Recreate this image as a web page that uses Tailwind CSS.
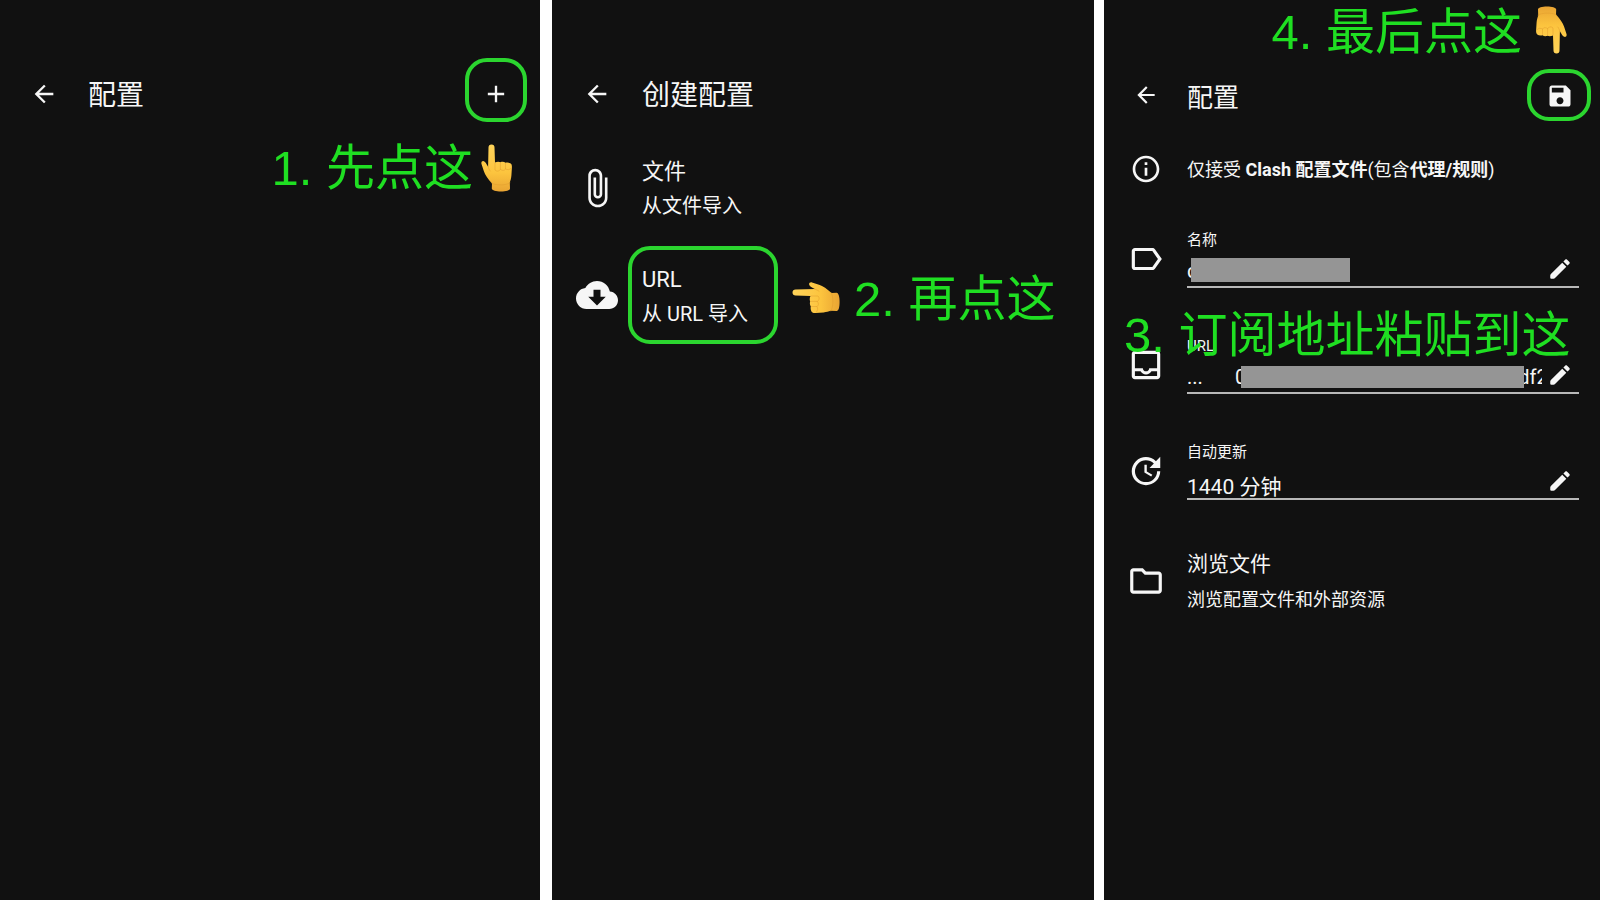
<!DOCTYPE html>
<html lang="zh-CN" class="h-full">
  <head>
    <meta charset="UTF-8" />
    <meta name="viewport" content="width=device-width, initial-scale=1.0" />
    <title>Clash 配置教程</title>
    <script src="https://cdn.jsdelivr.net/npm/@tailwindcss/browser@4"></script>
  </head>
  <body class="grid min-h-screen grid-cols-[552fr_552fr_496fr] bg-[#111111] font-[Roboto,'Noto_Sans_CJK_SC',sans-serif] text-[#f6f6f6]">
    <!-- shared icons -->
    <svg class="absolute size-0" aria-hidden="true">
      <defs>
        <linearGradient id="skin" x1="0" y1="0" x2="0" y2="1">
          <stop offset="0" stop-color="#ffd45a" />
          <stop offset="0.6" stop-color="#fcc43e" />
          <stop offset="1" stop-color="#e9a433" />
        </linearGradient>
        <g id="hand">
          <path fill="url(#skin)" d="M10.5.5c2 0 3 1.300 3 3L14 18.500c2-1 4-1 5.500-.3 1.800-.6 3.800-.4 5 .6 2-.4 4-.2 5.200.8 1 .8 1.300 2 1.200 4l-.5 8c-.2 3-1 5-1.600 7l.2 6c0 2-4 3-9 3s-9-1-9.200-3l.2-5C7 35 4 31 2.800 27L.5 20c-.6-2 .8-3.200 2.200-2.800 1.400.4 2.400 2 4.400 5.600L7.500 3.500c0-1.800 1-3 3-3z" />
          <path fill="none" stroke="#e0992c" stroke-opacity="0.6" stroke-width="0.8" stroke-linecap="round" d="M14 19v7c2 2 4 1 5.400-.5V19M19.500 25.500c2 1.500 4 1 5-.5v-5.500M24.500 25c2 1.200 4 .8 5.500-.6M11 39.500c5 2 13 2 18-.5M7.200 22.500c.5 2 .8 3 2 4.500" />
        </g>
      </defs>
      <symbol id="back" viewBox="0 0 24 24"><path d="M20 11H7.830l5.590-5.590L12 4l-8 8 8 8 1.410-1.410L7.830 13H20v-2z" /></symbol>
      <symbol id="edit" viewBox="0 0 24 24"><path d="M3 18q0-.8.600-1.400L14.060 6.190l3.750 3.750L7.400 20.400Q6.800 21 6 21H4q-1 0-1-1zM20.710 7.040c.39-.39.39-1.020 0-1.410l-2.340-2.340c-.39-.39-1.020-.39-1.410 0l-1.830 1.830 3.750 3.750 1.830-1.830z" /></symbol>
      <symbol id="point-up" viewBox="0 0 31 48"><use href="#hand" /></symbol>
      <symbol id="point-left" viewBox="0 0 48 31"><use href="#hand" transform="matrix(0 1 1 0 0 0)" /></symbol>
      <symbol id="point-down" viewBox="0 0 31 48"><use href="#hand" transform="rotate(180 15.5 24)" /></symbol>
    </svg>

    <!-- step 1 -->
    <section class="border-r-12 border-white pt-[58px]">
      <header class="grid h-[72px] grid-cols-[88px_1fr_auto] items-center pr-[13px]">
        <button type="button" aria-label="返回" class="justify-self-center"><svg class="size-7 fill-current"><use href="#back" /></svg></button>
        <h1 class="pt-1 text-[28px] leading-8">配置</h1>
        <button type="button" aria-label="新建" class="flex h-16 w-[62px] items-center justify-center self-start rounded-[22px] border-4 border-[#2bd52f] pt-2">
          <svg viewBox="0 0 24 24" class="size-7 fill-current"><path d="M19 13h-6v6h-2v-6H5v-2h6V5h2v6h6v2z" /></svg>
        </button>
      </header>
      <p class="mt-[14px] flex items-center justify-end gap-2 pr-[28px] font-['Liberation_Sans','Noto_Sans_CJK_SC',sans-serif] text-[49px] leading-[48px] whitespace-nowrap text-[#1fdf22]">
        1. 先点这
        <svg class="h-12 w-[31px]"><use href="#point-up" /></svg>
      </p>
    </section>

    <!-- step 2 -->
    <section class="border-r-10 border-white pt-[58px]">
      <header class="grid h-[72px] grid-cols-[90px_1fr] items-center">
        <button type="button" aria-label="返回" class="justify-self-center"><svg class="size-7 fill-current"><use href="#back" /></svg></button>
        <h1 class="pt-1 text-[28px] leading-8">创建配置</h1>
      </header>
      <ul class="mt-[22px] space-y-[22px]">
        <li class="grid grid-cols-[90px_1fr] items-center">
          <svg viewBox="0 0 24 24" class="size-[42px] justify-self-center fill-current"><path d="M16.500 6v11.500c0 2.210-1.790 4-4 4s-4-1.790-4-4V5c0-1.380 1.120-2.500 2.500-2.500s2.500 1.120 2.500 2.500v10.500c0 .55-.45 1-1 1s-1-.45-1-1V6H10v9.500c0 1.380 1.120 2.500 2.500 2.500s2.500-1.120 2.500-2.500V5c0-2.210-1.790-4-4-4S7 2.790 7 5v12.500c0 3.040 2.460 5.500 5.500 5.500s5.500-2.460 5.500-5.500V6h-1.500z" /></svg>
          <button type="button" class="pt-0.5 text-left text-xl leading-[35px]">
            <span class="block text-[22px] leading-[35px]">文件</span>
            从文件导入
          </button>
        </li>
        <li class="grid grid-cols-[90px_1fr] items-center">
          <svg viewBox="0 0 24 24" class="size-[42px] justify-self-center fill-current"><path d="M19.350 10.040C18.670 6.590 15.640 4 12 4 9.110 4 6.600 5.640 5.350 8.040 2.340 8.360 0 10.910 0 14c0 3.310 2.690 6 6 6h13c2.760 0 5-2.240 5-5 0-2.640-2.050-4.780-4.650-4.960zM17 13l-5 5-5-5h3V9h4v4h3z" /></svg>
          <div class="-ml-[14px] flex items-center">
            <button type="button" class="h-[98px] w-[150px] shrink-0 rounded-[22px] border-4 border-[#2bd52f] pt-1 pl-[10px] text-left text-xl leading-[35px] whitespace-nowrap">
              <span class="block text-[22px] leading-[35px]">URL</span>
              从 URL 导入
            </button>
            <p class="ml-[14px] flex items-center gap-[14px] pt-1 font-['Liberation_Sans','Noto_Sans_CJK_SC',sans-serif] text-[49px] leading-[48px] whitespace-nowrap text-[#1fdf22]">
              <svg class="h-[31px] w-12"><use href="#point-left" /></svg>
              <span class="pt-1">2. 再点这</span>
            </p>
          </div>
        </li>
      </ul>
    </section>

    <!-- steps 3 and 4 -->
    <section class="pt-1">
      <p class="flex items-center justify-end gap-[14px] pr-[33px] font-['Liberation_Sans','Noto_Sans_CJK_SC',sans-serif] text-[49px] leading-[48px] whitespace-nowrap text-[#1fdf22]">
        <span class="pt-1">4. 最后点这</span>
        <svg class="h-12 w-[31px]"><use href="#point-down" /></svg>
      </p>
      <header class="mt-[13px] grid h-[52px] grid-cols-[83px_1fr_auto] items-center pr-[9px]">
        <button type="button" aria-label="返回" class="justify-self-center"><svg class="size-[26px] fill-current"><use href="#back" /></svg></button>
        <h1 class="pt-1.5 text-[26px] leading-8">配置</h1>
        <button type="button" aria-label="保存" class="flex h-[52px] w-16 items-center justify-center rounded-[22px] border-4 border-[#2bd52f] pt-0.5 pl-0.5">
          <svg viewBox="0 0 24 24" class="size-7 fill-current"><path d="M17 3H5c-1.110 0-2 .9-2 2v14c0 1.100.89 2 2 2h14c1.100 0 2-.9 2-2V7l-4-4zm-5 16c-1.660 0-3-1.340-3-3s1.340-3 3-3 3 1.340 3 3-1.340 3-3 3zm3-10H5V5h10v4z" /></svg>
        </button>
      </header>
      <div class="mt-[31px] grid grid-cols-[83px_1fr] items-center">
        <svg viewBox="0 0 24 24" class="size-8 justify-self-center fill-current"><path d="M11 7h2v2h-2zm0 4h2v6h-2zm1-9C6.480 2 2 6.480 2 12s4.480 10 10 10 10-4.480 10-10S17.520 2 12 2zm0 18c-4.410 0-8-3.590-8-8s3.590-8 8-8 8 3.590 8 8-3.590 8-8 8z" /></svg>
        <p class="pt-0.5 text-lg leading-8">仅接受 <b>Clash 配置文件</b>(包含<b>代理/规则</b>)</p>
      </div>

      <form class="mt-[43px] space-y-[47px] pr-[21px]">
        <div class="grid grid-cols-[83px_1fr] items-center">
          <svg viewBox="0 0 24 24" class="size-[38px] justify-self-center fill-current"><path d="M17.630 5.840C17.270 5.330 16.670 5 16 5L5 5.010C3.900 5.010 3 5.900 3 7v10c0 1.100.9 1.990 2 1.990L16 19c.67 0 1.270-.33 1.630-.84L22 12l-4.370-6.160zM16 17H5V7h11l3.550 5L16 17z" /></svg>
          <div>
            <label for="name" class="block text-[15px] leading-[22px]">名称</label>
            <div class="relative flex items-center border-b-2 border-[#b8b8b8] pr-1.5">
              <input id="name" type="text" value="q" class="h-[35px] min-w-0 flex-1 pt-1 text-xl outline-none" />
              <span class="absolute top-[7px] left-1 h-6 w-[159px] bg-[#959595]"></span>
              <button type="button" aria-label="编辑名称"><svg class="size-[26px] fill-current"><use href="#edit" /></svg></button>
            </div>
          </div>
        </div>

        <div class="relative grid grid-cols-[83px_1fr] items-center">
          <svg viewBox="0 0 24 24" class="size-[38px] justify-self-center fill-current"><path d="M19 3H5c-1.100 0-2 .9-2 2v14c0 1.100.9 2 2 2h14c1.100 0 2-.9 2-2V5c0-1.100-.9-2-2-2zm0 16H5v-3h3.560c.69 1.190 1.970 2 3.450 2s2.750-.81 3.450-2H19v3zm0-5h-4.990c0 1.100-.9 2-2 2s-2-.9-2-2H5V5h14v9z" /></svg>
          <div>
            <label for="url" class="block text-[15px] leading-[22px]">URL</label>
            <div class="flex items-center border-b-2 border-[#b8b8b8] pr-1.5 text-xl">
              <input id="url" type="text" value="..." class="h-[35px] w-12 pt-1 outline-none" />
              <span class="w-1.5 overflow-hidden pt-1">0</span>
              <span class="mt-1 h-[22px] flex-1 bg-[#959595]"></span>
              <span class="mr-[5px] flex w-[18px] justify-center overflow-hidden pt-1">df2</span>
              <button type="button" aria-label="编辑 URL"><svg class="size-[26px] fill-current"><use href="#edit" /></svg></button>
            </div>
          </div>
          <p class="absolute -top-6 left-5 font-['Liberation_Sans','Noto_Sans_CJK_SC',sans-serif] text-[49px] leading-[48px] whitespace-nowrap text-[#1fdf22]">3. 订阅地址粘贴到这</p>
        </div>

        <div class="grid grid-cols-[83px_1fr] items-center">
          <svg viewBox="0 0 24 24" class="size-[38px] justify-self-center fill-current"><path d="M21 10.120h-6.780l2.740-2.820c-2.730-2.700-7.150-2.800-9.880-.1-2.730 2.710-2.730 7.080 0 9.790s7.150 2.710 9.880 0C18.320 15.650 19 14.080 19 12.100h2c0 1.980-.88 4.550-2.640 6.290-3.510 3.480-9.210 3.480-12.720 0-3.500-3.470-3.530-9.110-.02-12.580s9.140-3.470 12.650 0L21 3v7.120zM12.500 8v4.250l3.500 2.080-.72 1.210L11 13V8h1.500z" /></svg>
          <div>
            <label for="interval" class="block text-[15px] leading-[22px]">自动更新</label>
            <div class="flex items-center border-b-2 border-[#b8b8b8] pr-1.5">
              <input id="interval" type="text" value="1440 分钟" class="h-[35px] min-w-0 flex-1 pt-2 text-[21px] outline-none" />
              <button type="button" aria-label="编辑自动更新"><svg class="size-[26px] fill-current"><use href="#edit" /></svg></button>
            </div>
          </div>
        </div>
      </form>

      <div class="mt-[45px] grid grid-cols-[83px_1fr] items-center">
        <svg viewBox="0 0 24 24" class="size-[38px] justify-self-center fill-current"><path d="M9.170 6l2 2H20v10H4V6h5.170M10 4H4c-1.100 0-1.990.9-1.990 2L2 18c0 1.100.9 2 2 2h16c1.100 0 2-.9 2-2V8c0-1.100-.9-2-2-2h-8l-2-2z" /></svg>
        <button type="button" class="pt-0.5 text-left text-lg leading-[35px]">
          <span class="block text-[21px] leading-[35px]">浏览文件</span>
          浏览配置文件和外部资源
        </button>
      </div>
    </section>
  </body>
</html>
